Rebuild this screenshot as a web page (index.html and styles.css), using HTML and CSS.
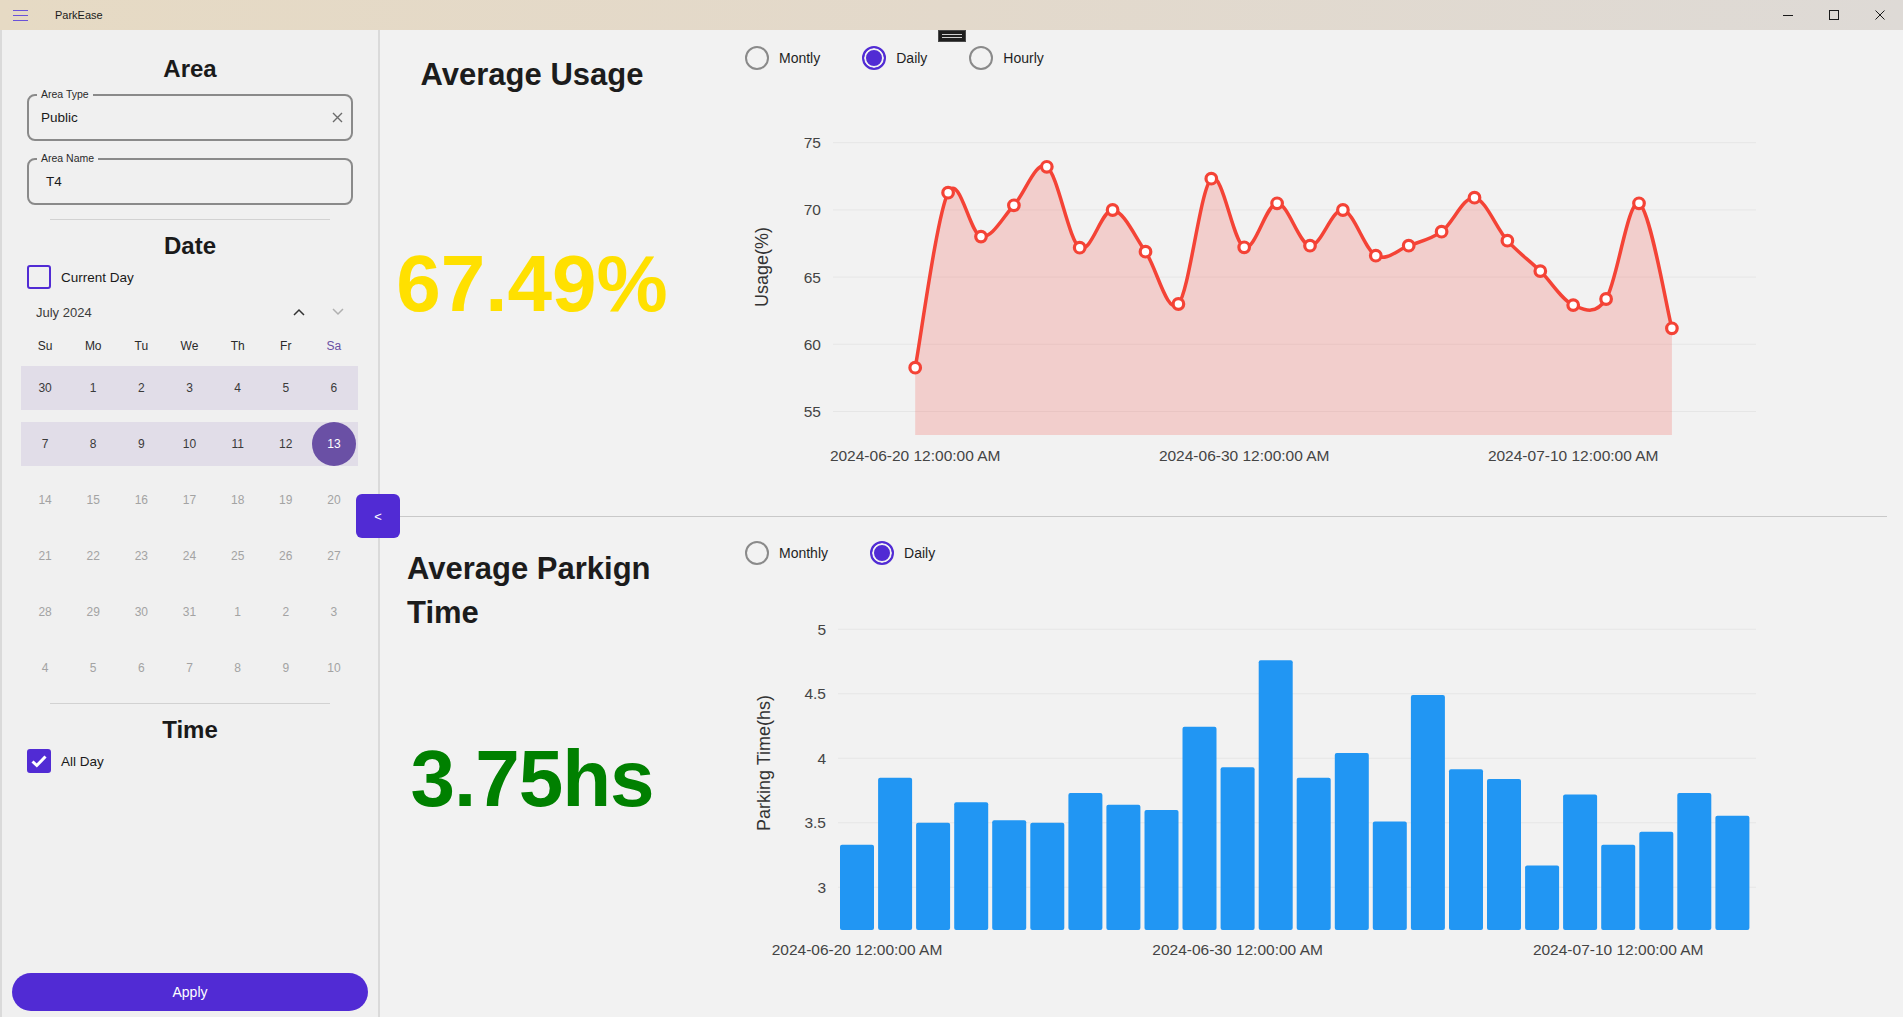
FILE: index.html
```html
<!DOCTYPE html>
<html lang="en">
<head>
<meta charset="utf-8">
<title>ParkEase</title>
<link rel="stylesheet" href="styles.css">
</head>
<body>
<header class="titlebar">
  <svg class="hamburger" width="15" height="11" viewBox="0 0 15 11"><path d="M0 0.5H15M0 5.5H15M0 10.5H15" stroke="#6a52d8" stroke-width="1" fill="none"/></svg>
  <span class="app-name">ParkEase</span>
  <div class="win-controls">
    <button class="win-btn" aria-label="Minimize"><svg width="10" height="10" viewBox="0 0 10 10"><path d="M0 5.5H10" stroke="#1a1a1a" stroke-width="1"/></svg></button>
    <button class="win-btn" aria-label="Maximize"><svg width="10" height="10" viewBox="0 0 10 10"><rect x="0.5" y="0.5" width="9" height="9" fill="none" stroke="#1a1a1a" stroke-width="1"/></svg></button>
    <button class="win-btn" aria-label="Close"><svg width="10" height="10" viewBox="0 0 10 10"><path d="M0.5 0.5L9.5 9.5M9.5 0.5L0.5 9.5" stroke="#1a1a1a" stroke-width="1"/></svg></button>
  </div>
</header>

<div class="app">
  <aside class="sidebar">
    <h2 class="side-heading side-heading--first">Area</h2>
    <div class="field">
      <span class="field-label">Area Type</span>
      <span class="field-value">Public</span>
      <svg class="field-clear" width="11" height="11" viewBox="0 0 11 11"><path d="M1 1L10 10M10 1L1 10" stroke="#6b6b6b" stroke-width="1.4" fill="none"/></svg>
    </div>
    <div class="field field--entry">
      <span class="field-label">Area Name</span>
      <span class="field-value">T4</span>
    </div>
    <hr class="side-divider">
    <h2 class="side-heading">Date</h2>
    <div class="check-row"><span class="checkbox"></span><span>Current Day</span></div>
    <div class="calendar">
      <div class="cal-header">
        <span class="cal-month">July 2024</span>
        <span class="cal-nav cal-nav--up"><svg width="12" height="8" viewBox="0 0 12 8"><path d="M1 7L6 2L11 7" stroke="#333" stroke-width="1.5" fill="none"/></svg></span>
        <span class="cal-nav cal-nav--down"><svg width="12" height="8" viewBox="0 0 12 8"><path d="M1 1L6 6L11 1" stroke="#b0b0b0" stroke-width="1.5" fill="none"/></svg></span>
      </div>
      <div class="cal-weekdays"><span>Su</span><span>Mo</span><span>Tu</span><span>We</span><span>Th</span><span>Fr</span><span class="sat">Sa</span></div>
      <div class="cal-weeks">
        <div class="cal-week cal-week--range"><span>30</span><span>1</span><span>2</span><span>3</span><span>4</span><span>5</span><span>6</span></div>
        <div class="cal-week cal-week--range"><span>7</span><span>8</span><span>9</span><span>10</span><span>11</span><span>12</span><span class="cal-day--selected">13</span></div>
        <div class="cal-week"><span>14</span><span>15</span><span>16</span><span>17</span><span>18</span><span>19</span><span>20</span></div>
        <div class="cal-week"><span>21</span><span>22</span><span>23</span><span>24</span><span>25</span><span>26</span><span>27</span></div>
        <div class="cal-week"><span>28</span><span>29</span><span>30</span><span>31</span><span>1</span><span>2</span><span>3</span></div>
        <div class="cal-week"><span>4</span><span>5</span><span>6</span><span>7</span><span>8</span><span>9</span><span>10</span></div>
      </div>
    </div>
    <hr class="side-divider side-divider--cal">
    <h2 class="side-heading">Time</h2>
    <div class="check-row"><span class="checkbox checkbox--checked"><svg width="20" height="20" viewBox="0 0 20 20"><path d="M3.5 10.5L7.8 14.5L16.5 5.5" stroke="#fff" stroke-width="3" fill="none"/></svg></span><span>All Day</span></div>
    <button class="apply-btn">Apply</button>
  </aside>

  <main class="main">
    <section class="metric metric--usage">
      <div class="metric-summary">
        <h1 class="metric-title">Average Usage</h1>
        <div class="metric-value metric-value--usage">67.49%</div>
      </div>
      <div class="metric-chart">
        <div class="radio-group">
          <span class="radio"><span class="radio-dot"></span>Montly</span>
          <span class="radio"><span class="radio-dot radio-dot--checked"></span>Daily</span>
          <span class="radio"><span class="radio-dot"></span>Hourly</span>
        </div>
        <svg class="chart" width="1060" height="380" viewBox="0 0 1060 380">
          <g class="grid">
            <line x1="103" x2="1026" y1="42.7" y2="42.7"/>
            <line x1="103" x2="1026" y1="109.9" y2="109.9"/>
            <line x1="103" x2="1026" y1="177.1" y2="177.1"/>
            <line x1="103" x2="1026" y1="244.3" y2="244.3"/>
            <line x1="103" x2="1026" y1="311.5" y2="311.5"/>
          </g>
          <g class="tick" text-anchor="end">
            <text x="91" y="42.7" dy="0.35em">75</text>
            <text x="91" y="109.9" dy="0.35em">70</text>
            <text x="91" y="177.1" dy="0.35em">65</text>
            <text x="91" y="244.3" dy="0.35em">60</text>
            <text x="91" y="311.5" dy="0.35em">55</text>
          </g>
          <text class="axis-title" transform="rotate(-90 32 167)" x="32" y="167" dy="0.35em" text-anchor="middle">Usage(%)</text>
          <g id="usage-series"></g>
          <g class="tick" text-anchor="middle">
            <text x="185.2" y="355.7" dy="0.35em">2024-06-20 12:00:00 AM</text>
            <text x="514.2" y="355.7" dy="0.35em">2024-06-30 12:00:00 AM</text>
            <text x="843.2" y="355.7" dy="0.35em">2024-07-10 12:00:00 AM</text>
          </g>
        </svg>
      </div>
    </section>
    <hr class="section-divider">
    <section class="metric metric--parking">
      <div class="metric-summary">
        <h1 class="metric-title">Average Parkign Time</h1>
        <div class="metric-value metric-value--parking">3.75hs</div>
      </div>
      <div class="metric-chart">
        <div class="radio-group">
          <span class="radio"><span class="radio-dot"></span>Monthly</span>
          <span class="radio"><span class="radio-dot radio-dot--checked"></span>Daily</span>
        </div>
        <svg class="chart" width="1060" height="400" viewBox="0 0 1060 400">
          <g class="grid">
            <line x1="108" x2="1026" y1="29.3" y2="29.3"/>
            <line x1="108" x2="1026" y1="93.8" y2="93.8"/>
            <line x1="108" x2="1026" y1="158.3" y2="158.3"/>
            <line x1="108" x2="1026" y1="222.8" y2="222.8"/>
            <line x1="108" x2="1026" y1="287.3" y2="287.3"/>
          </g>
          <g class="tick" text-anchor="end">
            <text x="96" y="29.3" dy="0.35em">5</text>
            <text x="96" y="93.8" dy="0.35em">4.5</text>
            <text x="96" y="158.3" dy="0.35em">4</text>
            <text x="96" y="222.8" dy="0.35em">3.5</text>
            <text x="96" y="287.3" dy="0.35em">3</text>
          </g>
          <text class="axis-title" transform="rotate(-90 34 163)" x="34" y="163" dy="0.35em" text-anchor="middle">Parking Time(hs)</text>
          <g id="park-series"></g>
          <g class="tick" text-anchor="middle">
            <text x="127" y="350" dy="0.35em">2024-06-20 12:00:00 AM</text>
            <text x="507.6" y="350" dy="0.35em">2024-06-30 12:00:00 AM</text>
            <text x="888.2" y="350" dy="0.35em">2024-07-10 12:00:00 AM</text>
          </g>
        </svg>
      </div>
    </section>
  </main>

  <button class="collapse-btn">&lt;</button>
  <div class="debug-bar"><span class="debug-lines"></span></div>
</div>
<script src="script.js"></script>
</body>
</html>
```

FILE: styles.css
```css
* { box-sizing: border-box; }
html, body { margin: 0; height: 100%; }
body {
  font-family: "Liberation Sans", Arial, sans-serif;
  color: #1a1a1a;
  background: #f2f2f2;
  overflow: hidden;
  display: flex;
  flex-direction: column;
}

/* title bar */
.titlebar {
  height: 30px;
  flex: none;
  display: flex;
  align-items: center;
  background: linear-gradient(90deg, #e6dac4 0%, #e3d9cb 50%, #dedad6 100%);
}
.hamburger { display: block; margin-left: 13px; }
.app-name { margin-left: 27px; font-size: 11px; color: #1a1a1a; }
.win-controls { margin-left: auto; display: flex; height: 100%; }
.win-btn {
  width: 46px; height: 30px; padding: 0; border: 0; background: transparent;
  display: flex; align-items: center; justify-content: center;
}
.win-btn svg { display: block; }

/* layout */
.app { flex: 1; min-height: 0; display: flex; position: relative; }

/* sidebar */
.sidebar {
  width: 380px; flex: none;
  display: flex; flex-direction: column;
  background: #f0f0f0;
  border-left: 2px solid #dadada;
  border-right: 2px solid #dadada;
}
.side-heading {
  margin: 11px 0 0;
  font-size: 24px; line-height: 29px; font-weight: 700;
  text-align: center; color: #1a1a1a;
}
.side-heading--first { margin-top: 24px; }

.field {
  position: relative;
  height: 47px;
  margin: 11px 25px 0;
  border: 2px solid #8a8a8a;
  border-radius: 8px;
  display: flex; align-items: center;
  padding-left: 12px;
}
.field + .field { margin-top: 17px; }
.field--entry { padding-left: 17px; }
.field-label {
  position: absolute; top: -8px; left: 8px;
  padding: 0 4px;
  font-size: 10.5px; line-height: 12px;
  color: #2a2a2a; background: #f0f0f0;
}
.field-value { font-size: 13.5px; color: #1a1a1a; }
.field-clear { display: block; margin-left: auto; margin-right: 8px; }

.side-divider { margin: 14px 48px 0; height: 0; border: 0; border-top: 1px solid #d2d2d2; }
.side-divider--cal { margin-top: 13px; }

.check-row {
  display: flex; align-items: center; gap: 10px;
  margin: 5px 0 0 25px;
  font-size: 13.5px; color: #1a1a1a;
}
.checkbox {
  width: 24px; height: 24px;
  border: 2px solid #512bd4; border-radius: 3px;
  display: flex; align-items: center; justify-content: center;
}
.checkbox--checked { background: #512bd4; }
.checkbox svg { display: block; }

/* calendar */
.calendar { margin: 3px 20px 0 19px; }
.cal-header { height: 40px; display: flex; align-items: center; padding-left: 15px; }
.cal-month { font-size: 13px; color: #3c3c3c; }
.cal-nav { width: 24px; height: 24px; display: flex; align-items: center; justify-content: center; }
.cal-nav svg { display: block; }
.cal-nav--up { margin-left: auto; }
.cal-nav--down { margin-left: 15px; margin-right: 8px; }
.cal-weekdays {
  height: 28px;
  display: grid; grid-template-columns: repeat(7, 1fr);
  align-items: center; text-align: center;
  font-size: 12px; color: #2a2a2a;
}
.cal-weekdays .sat { color: #6a51a3; }
.cal-weeks { margin-top: 6px; display: flex; flex-direction: column; gap: 12px; }
.cal-week {
  height: 44px;
  display: grid; grid-template-columns: repeat(7, 1fr);
  align-items: center; justify-items: center;
  font-size: 12px; color: #a3a3a3;
}
.cal-week--range { background: #e1dde8; color: #3a3a3a; }
.cal-day--selected {
  width: 44px; height: 44px; border-radius: 50%;
  background: #6a50a5; color: #fff;
  display: flex; align-items: center; justify-content: center;
}

.apply-btn {
  margin: auto 10px 6px;
  height: 38px;
  border: 0; border-radius: 19px;
  background: #512bd4; color: #fff;
  font: 14px "Liberation Sans", Arial, sans-serif;
}

/* main */
.main { flex: 1; min-width: 0; display: flex; flex-direction: column; background: #f2f2f2; }
.metric { display: flex; }
.metric--usage { height: 486px; flex: none; }
.metric--parking { flex: 1; min-height: 0; }
.section-divider { margin: 0 16px 0 0; height: 0; border: 0; border-top: 1px solid #c9c9c9; flex: none; }

.metric-summary {
  width: 304px; flex: none;
  display: flex; flex-direction: column; align-items: center;
}
.metric-title {
  margin: 23px 0 0;
  max-width: 250px;
  font-size: 31px; line-height: 44px; font-weight: 700;
  color: #1c1c1c;
}
.metric--parking .metric-title { margin-top: 30px; }
.metric-value { font-size: 80px; line-height: 80px; font-weight: 700; white-space: nowrap; }
.metric-value--usage { color: #ffe000; margin-top: 147px; }
.metric-value--parking { color: #008000; margin-top: 104px; letter-spacing: -1px; }

.metric-chart {
  flex: 1; min-width: 0;
  display: flex; flex-direction: column; align-items: flex-start;
  padding-left: 46px;
}
.radio-group { display: flex; gap: 42px; margin: 16px 0 0 15px; }
.metric--parking .radio-group { margin-top: 24px; }
.radio { display: flex; align-items: center; gap: 10px; font-size: 14px; color: #1f1f1f; }
.radio-dot { width: 24px; height: 24px; border-radius: 50%; border: 2px solid #8a8a8a; }
.radio-dot--checked { border-color: #512bd4; background: #512bd4; box-shadow: inset 0 0 0 2px #f2f2f2; }

.chart { display: block; margin-top: 30px; overflow: visible; }
.metric--parking .chart { margin-top: 35px; }
.grid line { stroke: #e6e6e6; stroke-width: 1; }
.tick { font: 15.5px "Liberation Sans", Arial, sans-serif; fill: #444; }
.axis-title { font: 18px "Liberation Sans", Arial, sans-serif; fill: #333; }
.area { fill: rgba(244, 67, 54, 0.2); }
.line { fill: none; stroke: #f44336; stroke-width: 3.5; stroke-linejoin: round; }
.marker { fill: #fff; stroke: #f44336; stroke-width: 3.2; }
.bar { fill: #2196f3; }

/* overlays */
.collapse-btn {
  position: absolute; left: 356px; top: 464px;
  width: 44px; height: 44px;
  border: 0; border-radius: 6px;
  background: #512bd4; color: #fff;
  font: 13px "Liberation Sans", Arial, sans-serif;
  padding: 0;
}
.debug-bar {
  position: absolute; left: 938px; top: 0;
  width: 28px; height: 12px;
  background: #1e1e1e; border: 1px solid #4a4a4a;
  display: flex; align-items: center; justify-content: center;
}
.debug-lines { width: 20px; height: 4px; border-top: 1px solid #cfcfcf; border-bottom: 1px solid #cfcfcf; }
```

FILE: script.js
```js
(function () {
  var NS = 'http://www.w3.org/2000/svg';
  var usage = [58.26, 71.28, 68.01, 70.34, 73.21, 67.19, 69.99, 66.89, 63.0, 72.32, 67.22, 70.49,
               67.34, 69.99, 66.59, 67.34, 68.38, 70.91, 67.71, 65.45, 62.92, 63.37, 70.49, 61.19];
  var park = [3.33, 3.85, 3.50, 3.66, 3.52, 3.50, 3.73, 3.64, 3.60, 4.245, 3.93, 4.76,
              3.85, 4.04, 3.51, 4.49, 3.915, 3.84, 3.17, 3.72, 3.33, 3.43, 3.73, 3.555];

  function el(tag, attrs, parent) {
    var e = document.createElementNS(NS, tag);
    for (var k in attrs) e.setAttribute(k, attrs[k]);
    parent.appendChild(e);
    return e;
  }
  function f(n) { return n.toFixed(1); }

  var lc = document.getElementById('usage-series');
  if (lc) {
    var pts = usage.map(function (v, i) { return [185.2 + 32.9 * i, 42.7 + (75 - v) * 13.44]; });
    var d = 'M' + f(pts[0][0]) + ',' + f(pts[0][1]);
    for (var i = 0; i < pts.length - 1; i++) {
      var p0 = pts[Math.max(i - 1, 0)], p1 = pts[i], p2 = pts[i + 1], p3 = pts[Math.min(i + 2, pts.length - 1)];
      var c1x = p1[0] + (p2[0] - p0[0]) / 6, c1y = p1[1] + (p2[1] - p0[1]) / 6;
      var c2x = p2[0] - (p3[0] - p1[0]) / 6, c2y = p2[1] - (p3[1] - p1[1]) / 6;
      d += ' C' + f(c1x) + ',' + f(c1y) + ' ' + f(c2x) + ',' + f(c2y) + ' ' + f(p2[0]) + ',' + f(p2[1]);
    }
    var last = pts[pts.length - 1];
    el('path', { d: d + ' L' + f(last[0]) + ',335 L' + f(pts[0][0]) + ',335 Z', 'class': 'area' }, lc);
    el('path', { d: d, 'class': 'line' }, lc);
    pts.forEach(function (p) { el('circle', { cx: f(p[0]), cy: f(p[1]), r: 5.3, 'class': 'marker' }, lc); });
  }

  var bc = document.getElementById('park-series');
  if (bc) {
    park.forEach(function (v, i) {
      var y = 29.3 + (5 - v) * 129;
      el('rect', { x: f(110 + 38.06 * i), y: f(y), width: 34, height: f(330 - y), rx: 2, 'class': 'bar' }, bc);
    });
  }
})();
```
